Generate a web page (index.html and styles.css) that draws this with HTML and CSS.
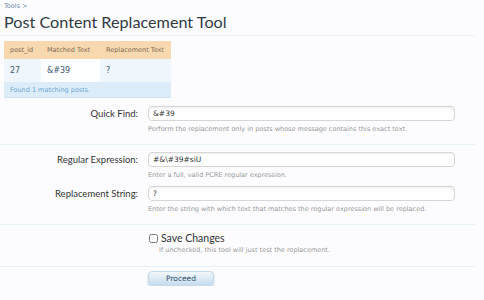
FILE: index.html
```html
<!DOCTYPE html>
<html lang="en">
<head>
    <meta charset="UTF-8">
    <title>Post Content Replacement Tool</title>
    <link rel="stylesheet" href="styles.css">
</head>
<body>
    <div class="crumbs"><a href="#">Tools</a> &gt;</div>
    <h1 class="title">Post Content Replacement Tool</h1>

    <table class="results">
        <tr>
            <th class="col-id">post_id</th>
            <th class="col-match">Matched Text</th>
            <th class="col-repl">Replacement Text</th>
        </tr>
        <tr>
            <td>27</td>
            <td class="matched">&amp;#39</td>
            <td>?</td>
        </tr>
        <tr>
            <td class="summary" colspan="3">Found 1 matching posts.</td>
        </tr>
    </table>

    <form class="form">
        <div class="row">
            <label class="label">Quick Find:</label>
            <div class="field">
                <input class="text" type="text" value="&amp;#39">
                <p class="hint">Perform the replacement only in posts whose message contains this exact text.</p>
            </div>
        </div>

        <div class="sep"></div>

        <div class="row gap">
            <label class="label">Regular Expression:</label>
            <div class="field">
                <input class="text" type="text" value="#&amp;\#39#siU">
                <p class="hint">Enter a full, valid PCRE regular expression.</p>
            </div>
        </div>
        <div class="row">
            <label class="label">Replacement String:</label>
            <div class="field">
                <input class="text" type="text" value="?">
                <p class="hint">Enter the string with which text that matches the regular expression will be replaced.</p>
            </div>
        </div>

        <div class="sep"></div>

        <div class="row">
            <div class="label"></div>
            <div class="field">
                <label class="check"><input type="checkbox"> Save Changes</label>
                <p class="hint indent">If unchecked, this tool will just test the replacement.</p>
            </div>
        </div>

        <div class="sep last"></div>

        <div class="row">
            <div class="label"></div>
            <div class="field">
                <button class="button" type="button">Proceed</button>
            </div>
        </div>
    </form>
</body>
</html>
```

FILE: styles.css
```css
body {
    margin: 0;
    padding: 0 4px;
    background: #fcfcfe;
    font-family: "DejaVu Sans", Verdana, sans-serif;
    color: #333;
}
.crumbs {
    font-size: 6.5px;
    line-height: 10px;
    padding-top: 1px;
    color: #6a8aa8;
}
.crumbs a {
    color: #6a8aa8;
    text-decoration: none;
}
.title {
    margin: 0 5px 0 -4px;
    padding: 0 0 2px 4px;
    font-family: Lato, sans-serif;
    font-weight: normal;
    font-size: 16.2px;
    line-height: 22px;
    color: #2f3a42;
    border-bottom: 1px solid #e6f0f3;
}
.results {
    margin-top: 5px;
    border-collapse: collapse;
    font-size: 6.5px;
    white-space: nowrap;
}
.results th {
    background: #f8d8ae;
    color: #7d6a58;
    font-weight: normal;
    text-align: left;
    height: 18px;
    padding: 0 0 0 6px;
}
.col-id { width: 31px; }
.col-match { width: 53px; }
.col-repl { width: 65px; }
.results td {
    background: #eff6fc;
    color: #3d5a73;
    font-size: 8px;
    height: 23px;
    padding: 0 0 0 6px;
}
.results td.matched {
    background: #fdfeff;
}
.results td.summary {
    background: #dcedf9;
    color: #6aa5d4;
    font-size: 6.5px;
    height: 15px;
    border-bottom: 1px solid #cfe4f3;
}
.form {
    margin: 8px 5px 0 0;
}
.row {
    display: grid;
    grid-template-columns: 134px 307px;
    column-gap: 10px;
}
.row.gap {
    margin-bottom: 6px;
}
.label {
    text-align: right;
    font-family: Lato, sans-serif;
    font-size: 9.5px;
    line-height: 15px;
    color: #333;
}
.text {
    display: block;
    box-sizing: border-box;
    width: 307px;
    height: 15px;
    margin: 0;
    padding: 0 4px;
    border: 1px solid #d6d6d6;
    border-radius: 4px;
    background: #fff;
    box-shadow: inset 0 1px 2px #eee;
    font-family: "DejaVu Sans", Verdana, sans-serif;
    font-size: 7.5px;
    color: #333;
}
.hint {
    margin: 3px 0 0;
    font-size: 6.5px;
    line-height: 10px;
    color: #999;
}
.hint.indent {
    margin-top: 0;
    padding-left: 11px;
}
.sep {
    height: 1px;
    background: #e6f1f4;
    margin: 10px 0 7px -4px;
}
.sep.last {
    margin: 11px 0 4px -4px;
}
.check {
    display: flex;
    align-items: center;
    gap: 3px;
    font-family: Lato, sans-serif;
    font-size: 10.5px;
    line-height: 13px;
    color: #333;
}
.check input {
    margin: 0 0 0 1px;
    width: 9px;
    height: 9px;
}
.button {
    display: block;
    width: 66px;
    height: 15px;
    padding: 0;
    border: 1px solid #c5d9ea;
    border-radius: 4px;
    background: linear-gradient(#f2f7fb, #c6dcee);
    box-shadow: 0 1px 2px #b9c6d2;
    font-family: "DejaVu Sans", Verdana, sans-serif;
    font-size: 7.5px;
    color: #2d4c66;
}
```
